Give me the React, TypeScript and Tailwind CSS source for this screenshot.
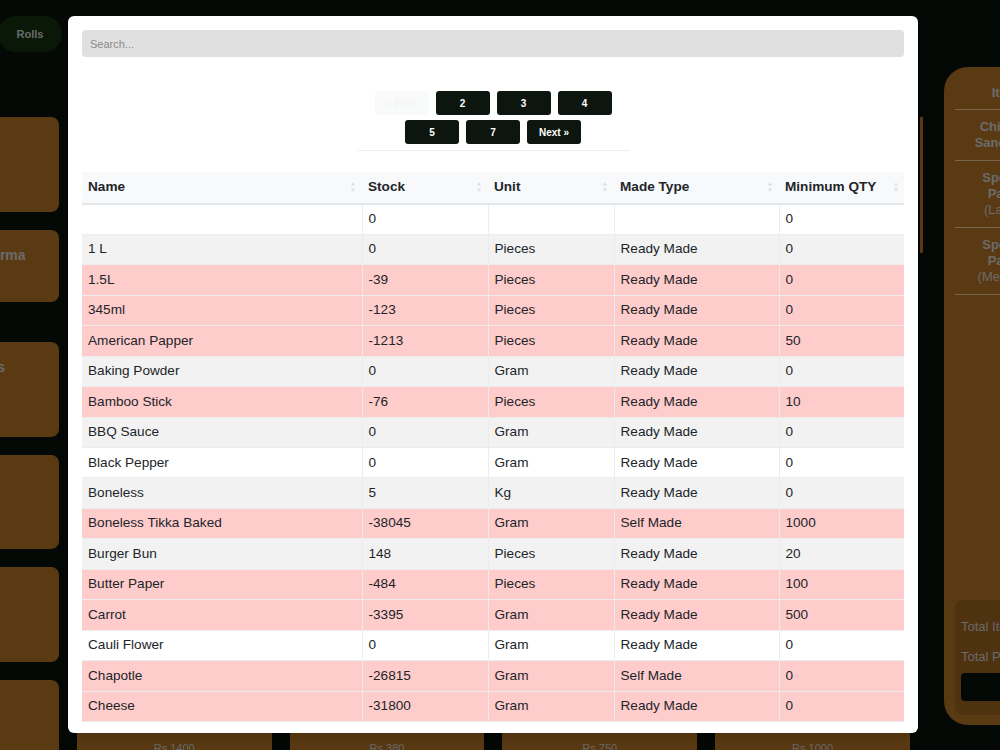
import * as React from "react";

interface StockRow {
  name: string;
  stock: number;
  unit: string;
  madeType: string;
  minQty: number;
}

const stockRows: StockRow[] = [
  { name: "", stock: 0, unit: "", madeType: "", minQty: 0 },
  { name: "1 L", stock: 0, unit: "Pieces", madeType: "Ready Made", minQty: 0 },
  { name: "1.5L", stock: -39, unit: "Pieces", madeType: "Ready Made", minQty: 0 },
  { name: "345ml", stock: -123, unit: "Pieces", madeType: "Ready Made", minQty: 0 },
  { name: "American Papper", stock: -1213, unit: "Pieces", madeType: "Ready Made", minQty: 50 },
  { name: "Baking Powder", stock: 0, unit: "Gram", madeType: "Ready Made", minQty: 0 },
  { name: "Bamboo Stick", stock: -76, unit: "Pieces", madeType: "Ready Made", minQty: 10 },
  { name: "BBQ Sauce", stock: 0, unit: "Gram", madeType: "Ready Made", minQty: 0 },
  { name: "Black Pepper", stock: 0, unit: "Gram", madeType: "Ready Made", minQty: 0 },
  { name: "Boneless", stock: 5, unit: "Kg", madeType: "Ready Made", minQty: 0 },
  { name: "Boneless Tikka Baked", stock: -38045, unit: "Gram", madeType: "Self Made", minQty: 1000 },
  { name: "Burger Bun", stock: 148, unit: "Pieces", madeType: "Ready Made", minQty: 20 },
  { name: "Butter Paper", stock: -484, unit: "Pieces", madeType: "Ready Made", minQty: 100 },
  { name: "Carrot", stock: -3395, unit: "Gram", madeType: "Ready Made", minQty: 500 },
  { name: "Cauli Flower", stock: 0, unit: "Gram", madeType: "Ready Made", minQty: 0 },
  { name: "Chapotle", stock: -26815, unit: "Gram", madeType: "Self Made", minQty: 0 },
  { name: "Cheese", stock: -31800, unit: "Gram", madeType: "Ready Made", minQty: 0 },
];

const columns = [
  { title: "Name", width: "w-[280px]" },
  { title: "Stock", width: "w-[126px]" },
  { title: "Unit", width: "w-[126px]" },
  { title: "Made Type", width: "w-[165px]" },
  { title: "Minimum QTY", width: "w-[126px]" },
];

// product grid behind the modal, 5 columns x 6 rows
const products = [
  ["Burger", "Rs 650"],
  ["Zinger Burger", "Rs 550"],
  ["Beef Burger", "Rs 700"],
  ["Club Sandwich", "Rs 600"],
  ["Chicken Sandwich", "Rs 450"],
  ["Chicken Shawarma", "Rs 350"],
  ["Beef Shawarma", "Rs 400"],
  ["Platter", "Rs 900"],
  ["Wrap", "Rs 450"],
  ["Pasta", "Rs 800"],
  ["Loaded Fries", "Rs 500"],
  ["Plain Fries", "Rs 250"],
  ["Nuggets", "Rs 550"],
  ["Wings", "Rs 600"],
  ["Hot Shots", "Rs 500"],
  ["Pizza", "Rs 1800"],
  ["Fajita Pizza", "Rs 1500"],
  ["Tikka Pizza", "Rs 1500"],
  ["Cheese Pizza", "Rs 1400"],
  ["Veggie Pizza", "Rs 1300"],
  ["Roll", "Rs 350"],
  ["Kabab Roll", "Rs 300"],
  ["Zinger Roll", "Rs 400"],
  ["Malai Roll", "Rs 380"],
  ["Garlic Roll", "Rs 380"],
  ["Deal", "Rs 2500"],
  ["Special Pasta", "Rs 1400"],
  ["Crown Crust", "Rs 380"],
  ["Pizza Fries", "Rs 750"],
  ["Mega Deal", "Rs 1000"],
];

function SortIcon() {
  return (
    <svg width="6" height="10" viewBox="0 0 6 10" className="shrink-0">
      <path d="M3 0.5 L5 3.5 H1 Z M3 9.5 L1 6.5 H5 Z" fill="#dcdcdc" />
    </svg>
  );
}

function ProductGrid() {
  return (
    <div className="grid w-[1046px] grid-cols-5 auto-rows-[94.5px] gap-[18px]">
      {products.map(([name, price], i) => (
        <div
          key={name}
          className={
            i === 5
              ? "flex h-[72px] flex-col items-center rounded-lg bg-[#5a3a13] pt-[17px]"
              : "flex flex-col items-center rounded-lg bg-[#5a3a13] pt-[17px] pb-[19px]"
          }
        >
          <span className="whitespace-nowrap text-[14px] font-bold leading-[16px] text-[#6b6b6b]">
            {name}
          </span>
          <span className="mt-auto text-[11px] leading-[13px] text-[#6b6b6b]">{price}</span>
        </div>
      ))}
    </div>
  );
}

function OrderPanel() {
  const items = [
    ["Chicken", "Sandwich"],
    ["Special", "Pasta", "(Large)"],
    ["Special", "Pasta", "(Medium)"],
  ];
  return (
    <div className="mt-[67px] flex h-[658px] w-[260px] shrink-0 flex-col rounded-[24px] bg-[#5a3a13] px-[11px]">
      <div className="flex h-[43px] border-b border-[#77654f]">
        <div className="w-[100px] pt-[19px] text-center text-[13px] font-bold leading-[14px] text-[#6b6b6b]">
          Item
        </div>
        <div className="w-[60px] pt-[19px] text-center text-[13px] font-bold leading-[14px] text-[#6b6b6b]">
          Qty
        </div>
      </div>
      {items.map((lines, i) => (
        <div key={i} className="flex border-b border-[#77654f] py-[9px]">
          <div className="w-[100px] text-center text-[13px] leading-[16px] text-[#6b6b6b]">
            {lines.map((l, j) => (
              <div key={j} className={j === 2 ? "font-normal" : "font-bold"}>
                {l}
              </div>
            ))}
          </div>
        </div>
      ))}
      <div className="flex-1" />
      <div className="mb-[10px] flex h-[115px] flex-col rounded-lg bg-[#4f320f] px-[6px] pt-[20px]">
        <div className="text-[13px] leading-[14px] text-[#6b6b6b]">Total Items: 4</div>
        <div className="mt-[16px] text-[13px] leading-[14px] text-[#6b6b6b]">Total Price: Rs 4200</div>
        <div className="mt-[9px] h-[28px] w-full rounded bg-[#050905]" />
      </div>
    </div>
  );
}

function Backdrop() {
  return (
    <div className="flex h-[750px] w-[1136px] -ml-[136px]">
      <div className="flex w-[1060px] shrink-0 flex-col pt-[16px]">
        <div className="flex gap-[10px] pl-[134px]">
          <div className="flex h-[36px] w-[64px] items-center justify-center rounded-full bg-[#0a1907] text-[11px] font-bold text-[#6b6b6b]">
            Rolls
          </div>
          <div className="flex h-[36px] w-[70px] items-center justify-center rounded-full bg-[#0a1907] text-[11px] font-bold text-[#6b6b6b]">
            Pizza
          </div>
        </div>
        <div className="mt-[65px] flex">
          <ProductGrid />
          <div className="ml-[10px] h-[136px] w-[3px] bg-[#5a3a13]" />
        </div>
      </div>
      <div className="ml-[20px]">
        <OrderPanel />
      </div>
    </div>
  );
}

export default function App() {
  return (
    <div className="relative h-[750px] w-[1000px] overflow-hidden bg-[#050905] font-['Liberation_Sans',Arial,sans-serif]">
      <Backdrop />

      <div className="absolute left-[68px] top-[16px] flex h-[717px] w-[850px] flex-col rounded-md bg-white px-[14px] pt-[14px] pb-[11px] shadow-lg">
        <input
          placeholder="Search..."
          className="h-[27px] w-full shrink-0 rounded bg-[#e0e0e0] px-[8px] text-[11px] text-[#333] outline-none placeholder:text-[#8a8a8a]"
        />

        <div className="mt-[34px] flex shrink-0 justify-center">
          <div className="flex w-[273px] flex-wrap justify-center gap-x-[7px] gap-y-[5px] border-b border-[#eeeeee] pb-[6px]">
            <button className="h-[24px] w-[54px] rounded-[3px] bg-[#f9fafa] text-[10px] font-bold text-[#f5f5f5]">
              « Prev
            </button>
            {["2", "3", "4", "5", "7", "Next »"].map((p) => (
              <button
                key={p}
                className="h-[24px] w-[54px] rounded-[3px] bg-[#0c150e] text-[10px] font-bold text-white"
              >
                {p}
              </button>
            ))}
          </div>
        </div>

        <div className="mt-[21px] flex-1 overflow-hidden">
          <table className="w-[823px] table-fixed border-collapse text-[13.6px] text-[#212529]">
            <thead>
              <tr className="h-[32px] bg-[#f8f9fa]">
                {columns.map((c) => (
                  <th
                    key={c.title}
                    className={`${c.width} border-b-2 border-[#e4e7ea] px-[6px] text-left font-bold`}
                  >
                    <div className="flex items-center justify-between">
                      <span>{c.title}</span>
                      <SortIcon />
                    </div>
                  </th>
                ))}
              </tr>
            </thead>
            <tbody>
              {stockRows.map((r, i) => {
                const low = r.stock < r.minQty;
                const bg = low ? "bg-[#ffcccc]" : i % 2 === 1 ? "bg-[#f2f2f2]" : "bg-white";
                return (
                  <tr key={i} className={`h-[30.45px] ${bg}`}>
                    {[r.name, String(r.stock), r.unit, r.madeType, String(r.minQty)].map((v, j) => (
                      <td
                        key={j}
                        className="border border-[#ececec] px-[6px] first:border-l-0 last:border-r-0"
                      >
                        {v}
                      </td>
                    ))}
                  </tr>
                );
              })}
            </tbody>
          </table>
        </div>
      </div>
    </div>
  );
}
